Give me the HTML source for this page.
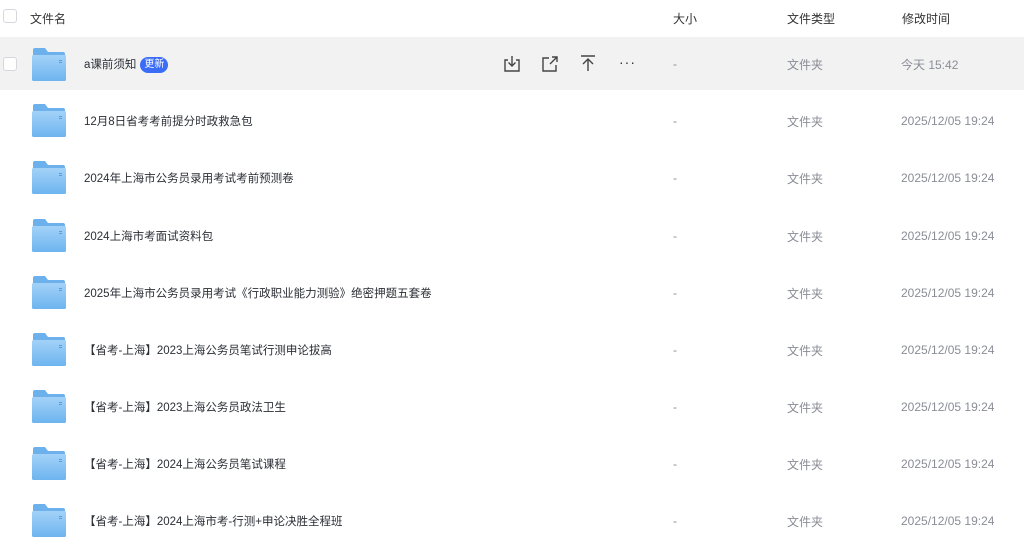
<!DOCTYPE html>
<html><head><meta charset="utf-8"><style>
*{margin:0;padding:0;box-sizing:border-box}
body{width:1024px;height:541px;overflow:hidden;background:#fff;font-family:"Liberation Sans","Noto Sans CJK SC",sans-serif;font-size:12px;color:#2b2f36}
.hdr{position:absolute;top:0;left:0;width:1024px;height:37px;color:#333}
.row{position:absolute;left:0;width:1024px;height:57px}
.sel{background:#f2f2f3;height:53px}
.t{position:absolute;white-space:nowrap}
.n{font-size:11.5px}
.cb{position:absolute;left:3px;width:14px;height:14px;border:1px solid #d5d7dc;border-radius:3px;background:#fff}
.fold{position:absolute;left:32px;width:34px;height:33px}
.g{color:#8a8d96}
.badge{display:inline-block;background:#3b6cf6;color:#fff;font-size:10px;border-radius:8px;padding:0 4px;height:16px;line-height:16px;margin-left:4px;vertical-align:1px}
</style></head><body>
<div class="hdr">
<div class="cb" style="top:9px"></div>
<div class="t" style="left:30px;top:10px">文件名</div>
<div class="t" style="left:673px;top:10px">大小</div>
<div class="t" style="left:787px;top:10px">文件类型</div>
<div class="t" style="left:902px;top:10px">修改时间</div>
</div>
<svg width="0" height="0" style="position:absolute"><defs>
<linearGradient id="fg" x1="0" y1="0" x2="0" y2="1"><stop offset="0" stop-color="#a3d2f8"/><stop offset="1" stop-color="#6db4ef"/></linearGradient>
<symbol id="f" viewBox="0 0 34 33"><path d="M1 2Q1 0 3 0H13L16 4H31Q33 4 33 6V8H1Z" fill="#6cb0ec"/><rect x="0" y="7" width="34" height="26" rx="1.5" fill="url(#fg)"/><rect x="27" y="12" width="3" height="1" fill="#5a9ddd"/><rect x="27" y="14" width="3" height="1" fill="#5a9ddd"/></symbol>
</defs></svg>
<div class="row sel" style="top:37px">
<div class="cb" style="top:20px"></div>
<svg class="fold" style="top:11px"><use href="#f"/></svg>
<div class="t n" style="left:84px;top:19px">a课前须知<span class="badge">更新</span></div>
<svg class="t" style="left:502px;top:17px" width="20" height="20" viewBox="0 0 20 20" fill="none" stroke="#444" stroke-width="1.4"><path d="M6 6H3V17H17V6H14M10 2V12M6.5 8.5L10 12L13.5 8.5"/></svg>
<svg class="t" style="left:540px;top:17px" width="20" height="20" viewBox="0 0 20 20" fill="none" stroke="#444" stroke-width="1.4"><path d="M9 4H3V17H16V11M10 10L17 3M12 3H17V8"/></svg>
<svg class="t" style="left:578px;top:16px" width="20" height="20" viewBox="0 0 20 20" fill="none" stroke="#444" stroke-width="1.4"><path d="M3 3H17M10 18V6M5 11L10 6L15 11"/></svg>
<div class="t" style="left:619px;top:17px;font-size:14px;letter-spacing:1px">···</div>
<div class="t g" style="left:673px;top:20px">-</div>
<div class="t g" style="left:787px;top:19px">文件夹</div>
<div class="t g" style="left:901px;top:19px">今天 15:42</div>
</div>
<div class="row" style="top:93px"><svg class="fold" style="top:11px"><use href="#f"/></svg><div class="t n" style="left:84px;top:20px">12月8日省考考前提分时政救急包</div><div class="t g" style="left:673px;top:21px">-</div><div class="t g" style="left:787px;top:20px">文件夹</div><div class="t g" style="left:901px;top:21px">2025/12/05 19:24</div></div>
<div class="row" style="top:150px"><svg class="fold" style="top:11px"><use href="#f"/></svg><div class="t n" style="left:84px;top:20px">2024年上海市公务员录用考试考前预测卷</div><div class="t g" style="left:673px;top:21px">-</div><div class="t g" style="left:787px;top:20px">文件夹</div><div class="t g" style="left:901px;top:21px">2025/12/05 19:24</div></div>
<div class="row" style="top:208px"><svg class="fold" style="top:11px"><use href="#f"/></svg><div class="t n" style="left:84px;top:20px">2024上海市考面试资料包</div><div class="t g" style="left:673px;top:21px">-</div><div class="t g" style="left:787px;top:20px">文件夹</div><div class="t g" style="left:901px;top:21px">2025/12/05 19:24</div></div>
<div class="row" style="top:265px"><svg class="fold" style="top:11px"><use href="#f"/></svg><div class="t n" style="left:84px;top:20px">2025年上海市公务员录用考试《行政职业能力测验》绝密押题五套卷</div><div class="t g" style="left:673px;top:21px">-</div><div class="t g" style="left:787px;top:20px">文件夹</div><div class="t g" style="left:901px;top:21px">2025/12/05 19:24</div></div>
<div class="row" style="top:322px"><svg class="fold" style="top:11px"><use href="#f"/></svg><div class="t n" style="left:84px;top:20px">【省考-上海】2023上海公务员笔试行测申论拔高</div><div class="t g" style="left:673px;top:21px">-</div><div class="t g" style="left:787px;top:20px">文件夹</div><div class="t g" style="left:901px;top:21px">2025/12/05 19:24</div></div>
<div class="row" style="top:379px"><svg class="fold" style="top:11px"><use href="#f"/></svg><div class="t n" style="left:84px;top:20px">【省考-上海】2023上海公务员政法卫生</div><div class="t g" style="left:673px;top:21px">-</div><div class="t g" style="left:787px;top:20px">文件夹</div><div class="t g" style="left:901px;top:21px">2025/12/05 19:24</div></div>
<div class="row" style="top:436px"><svg class="fold" style="top:11px"><use href="#f"/></svg><div class="t n" style="left:84px;top:20px">【省考-上海】2024上海公务员笔试课程</div><div class="t g" style="left:673px;top:21px">-</div><div class="t g" style="left:787px;top:20px">文件夹</div><div class="t g" style="left:901px;top:21px">2025/12/05 19:24</div></div>
<div class="row" style="top:493px"><svg class="fold" style="top:11px"><use href="#f"/></svg><div class="t n" style="left:84px;top:20px">【省考-上海】2024上海市考-行测+申论决胜全程班</div><div class="t g" style="left:673px;top:21px">-</div><div class="t g" style="left:787px;top:20px">文件夹</div><div class="t g" style="left:901px;top:21px">2025/12/05 19:24</div></div>
</body></html>
